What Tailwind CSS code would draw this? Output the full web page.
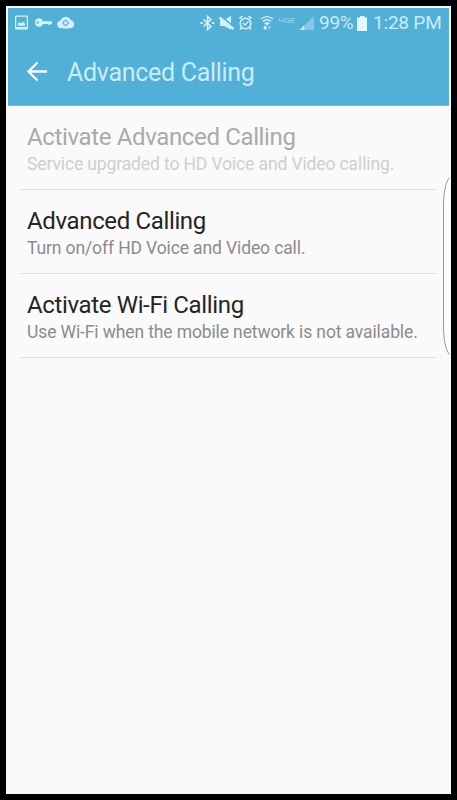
<!DOCTYPE html>
<html lang="en">
<head>
<meta charset="utf-8">
<title>Advanced Calling</title>
<script src="https://cdn.jsdelivr.net/npm/@tailwindcss/browser@4"></script>
</head>
<body class="bg-black w-[457px] h-[800px] overflow-hidden pl-[6px] pt-[6px] font-[Roboto,sans-serif]">
<div class="relative w-[445px] h-[788px] bg-[#fafafa] pt-[2px] px-[2px] overflow-hidden whitespace-nowrap">
  <header class="h-[98px] w-[441px] bg-[#52afd5] text-[#c9ecfa] border-b border-[#6dbbdb]">
    <div class="h-[30px] flex items-center justify-between pl-[7px] pr-[7px]">
      <div class="flex items-center">
        <svg class="w-[60px] h-[16px]" viewBox="0 0 60 16" fill="#d3f1fb">
          <path fill-rule="evenodd" d="M1.200 .5H11.800Q13 .5 13 1.700V13.300Q13 14.500 11.800 14.500H1.200Q0 14.500 0 13.300V1.700Q0 .5 1.200 .5ZM1.300 1.800V12H11.700V1.800Z"/>
          <path d="M3 10.800V8.300L4.500 7.300L6 8.300L8 6.800L10 8.800V10.800Z"/>
          <path fill-rule="evenodd" d="M24.200 3.300A4.200 4.200 0 0 1 28 6.200H37V9H35.500V10H33.500V9H28A4.200 4.200 0 1 1 24.200 3.300ZM22.500 6.400A1.200 1.200 0 1 0 22.500 8.800A1.200 1.200 0 0 0 22.500 6.400Z"/>
          <path d="M45.500 13.200A3.900 3.900 0 0 1 45.500 5.500A5.400 5.400 0 0 1 55.500 5A4.200 4.200 0 0 1 56 13.200H54L51 13.800L48 13.200Z"/>
          <circle cx="50.700" cy="7.900" r="2.400" fill="none" stroke="#52afd5" stroke-width="1"/>
          <path d="M50.700 4.500V6.700M50.700 9.200V11.400M47.300 7.900H49.500M52 7.900H54.200" stroke="#52afd5" stroke-width=".8"/>
        </svg>
      </div>
      <div class="flex items-center">
        <svg class="w-[116px] h-[18px] mr-[3px]" viewBox="0 0 116 18" fill="none" stroke="#d3f1fb">
          <path d="M3.500 5.500L11 12.500L7.500 15.500V2.500L11 5.500L3.500 12.500" stroke-width="1.600"/>
          <path d="M.5 9H2.800M12 9H14.300" stroke-width="1.800"/>
          <path d="M20 6H24L31 2V15.500L24 12H20Z" fill="#d3f1fb" stroke="none"/>
          <path d="M20 1.500L34 13" stroke="#52afd5" stroke-width="2"/>
          <path d="M19.500 3.500L33.500 15" stroke-width="2.300"/>
          <circle cx="45.500" cy="9.500" r="5.300" stroke-width="1.600"/>
          <path d="M39.500 4.500L42.500 2.200M48.500 2.200L51.500 4.500M41.500 13.500L40 15.500M49.500 13.500L51 15.500" stroke-width="1.600"/>
          <path d="M43 9L45 11L48.500 7.500" stroke-width="1.300"/>
          <path d="M61 5Q67 .2 73 5M62.800 7.500Q67 4 71.200 7.500M64.500 10Q67 7.500 69.500 10" stroke-width="1.400"/>
          <path d="M67 9.200V11" stroke-width="2"/>
          <path d="M65.200 11.500V14.500M63.700 13.200L65.200 15L66.700 13.200" stroke-width="1.400"/>
          <path d="M69.300 15.500V12.500M68 13.500L69.300 12L70.600 13.500" stroke="#a5d8eb"/>
          <path d="M79.500 4V7H83M83.200 4V8.800M89 4.500H85.500V8.300H89V6.500H87.500M94.500 4.500H91L90.500 6.500M94.500 6.500H91.500L90.500 8.500H94" stroke="#98d0e7" stroke-width=".9"/>
          <path d="M114 2V16H99.500Z" fill="#86c7e2" stroke="none"/>
          <path d="M104.500 11.200V16H99.500Z" fill="#d3f1fb" stroke="none"/>
          <path d="M101.800 12V16M105 10V16" stroke="#62b6d9" stroke-width=".6"/>
        </svg>
        <span class="text-[19px] leading-[30px] w-[38px] tracking-[-0.3px]">99%</span>
        <svg class="w-[10px] h-[15px] mr-[6px]" viewBox="0 0 10 15"><path d="M3 0H7.500V1.500H10V15H0V1.500H3Z" fill="#e2f7ff"/></svg>
        <span class="text-[19px] leading-[30px] w-[69px] tracking-[-0.2px]">1:28 PM</span>
      </div>
    </div>
    <div class="h-[68px] flex items-center pl-[18px] pb-[1px]">
      <svg class="w-[22px] h-[22px] mr-[19px] -mt-[2px]" viewBox="0 0 22 22" fill="none" stroke="#f2fcff" stroke-width="2.300"><path d="M21 11.500H3M11.500 2.500L2.500 11.500L11.500 20.500"/></svg>
      <h1 class="text-[25px] leading-[30px] pt-[2px] tracking-[-0.3px]">Advanced Calling</h1>
    </div>
  </header>
  <main class="px-[12px] w-[441px]">
    <section class="h-[84px] pl-[7px] pt-[17px] border-b border-[#dedfdf]">
      <h2 class="text-[24px] leading-[28px] tracking-[-0.36px] text-[#a9aaaa]">Activate Advanced Calling</h2>
      <p class="text-[17.500px] leading-[26px] tracking-[-0.12px] text-[#cecfcf]">Service upgraded to HD Voice and Video calling.</p>
    </section>
    <section class="h-[84px] pl-[7px] pt-[17px] border-b border-[#dedfdf]">
      <h2 class="text-[24px] leading-[28px] tracking-[-0.36px] text-[#252525]">Advanced Calling</h2>
      <p class="text-[17.500px] leading-[26px] tracking-[-0.12px] text-[#8b8c8c]">Turn on/off HD Voice and Video call.</p>
    </section>
    <section class="h-[84px] pl-[7px] pt-[17px] border-b border-[#dedfdf]">
      <h2 class="text-[24px] leading-[28px] tracking-[-0.36px] text-[#252525]">Activate Wi-Fi Calling</h2>
      <p class="text-[17.500px] leading-[26px] tracking-[-0.12px] text-[#8b8c8c]">Use Wi-Fi when the mobile network is not available.</p>
    </section>
  </main>
  <svg class="absolute left-[436px] top-[170px] w-[9px] h-[180px]" viewBox="0 0 9 180" fill="none" stroke="#969696"><path d="M7.500 1.500C3 7 1.500 18 1.500 32V148C1.500 162 3 173 7.500 178.500" fill="#fff"/></svg>
</div>
</body>
</html>
